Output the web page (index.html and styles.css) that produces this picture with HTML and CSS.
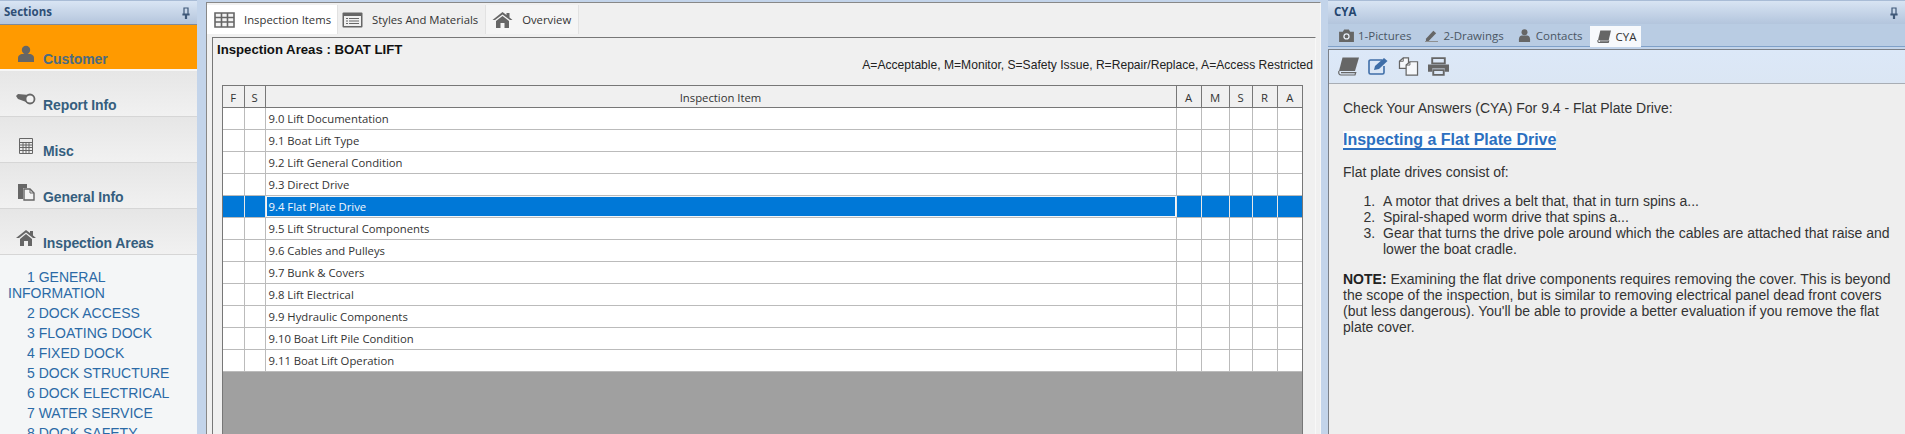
FILE: index.html
```html
<!DOCTYPE html>
<html lang="en">
<head>
<meta charset="utf-8">
<title>Inspection</title>
<link rel="stylesheet" href="styles.css">
</head>
<body>
<div class="app">
  <aside class="sections">
    <header class="pane-title"><span>Sections</span>
      <svg class="pin" viewBox="0 0 8 12" width="8" height="12"><path d="M2 1h4v6H2zM1 7h6v1H1zM3.500 8h1v4h-1z" fill="none" stroke="#3f5878" stroke-width="1.200"/></svg>
    </header>
    <div class="nav-item active">
      <svg class="nav-icon" viewBox="0 0 18 18"><circle cx="9" cy="5" r="4.200" fill="#666"/><path d="M1 17v-4c0-3 3-4 4-4h8c1 0 4 1 4 4v4z" fill="#666"/></svg>
      <span>Customer</span></div>
    <div class="nav-item">
      <svg class="nav-icon wide" viewBox="0 0 20 18"><path d="M0 5l2-2 11 1v8L2 8z" fill="#666"/><circle cx="14" cy="8" r="4.500" fill="#f2f2f2" stroke="#666" stroke-width="1.800"/></svg>
      <span>Report Info</span></div>
    <div class="nav-item">
      <svg class="nav-icon" viewBox="0 0 18 18"><path d="M2.500 1.500h13v15h-13zM2.500 5.500h13M2.500 8h13M2.500 10.500h13M2.500 13.500h13M6 5.500v11M9 5.500v11M12 5.500v11" fill="none" stroke="#666" stroke-width="1"/></svg>
      <span>Misc</span></div>
    <div class="nav-item">
      <svg class="nav-icon" viewBox="0 0 18 18"><path d="M1 1h9v4H6v11H1z" fill="#666"/><path d="M7 6h6l4 4v7H7z" fill="#f2f2f2" stroke="#666" stroke-width="1.400"/><path d="M13 6v4h4" fill="none" stroke="#666"/></svg>
      <span>General Info</span></div>
    <div class="nav-item">
      <svg class="nav-icon wide" viewBox="0 0 20 18"><path d="M10 1L0 9h3l7-5.500L17 9h3l-3-2.500V2h-3v2z" fill="#666"/><path d="M4 10l6-5 6 5v7h-4v-5H8v5H4z" fill="#666"/></svg>
      <span>Inspection Areas</span></div>
    <ul class="area-list">
      <li><span class="indent"></span>1 GENERAL INFORMATION</li>
      <li><span class="indent"></span>2 DOCK ACCESS</li>
      <li><span class="indent"></span>3 FLOATING DOCK</li>
      <li><span class="indent"></span>4 FIXED DOCK</li>
      <li><span class="indent"></span>5 DOCK STRUCTURE</li>
      <li><span class="indent"></span>6 DOCK ELECTRICAL</li>
      <li><span class="indent"></span>7 WATER SERVICE</li>
      <li><span class="indent"></span>8 DOCK SAFETY</li>
    </ul>
  </aside>

  <main class="center">
    <nav class="main-tabs">
      <div class="main-tab current">
        <svg class="tab-icon" viewBox="0 0 21 16"><path d="M1 1h19v14H1zM1 5.500h19M1 10h19M7.500 1v14M13.500 1v14" fill="#f4f4f4" stroke="#666" stroke-width="1.600"/></svg>
        <span>Inspection Items</span></div>
      <div class="main-tab second">
        <svg class="tab-icon" viewBox="0 0 21 16"><rect x="0.500" y="0.500" width="20" height="15" rx="1" fill="#666"/><rect x="2" y="4" width="17" height="10" fill="#f0f0f0"/><path d="M4 6.500h2M4 9h2M4 11.500h2M7 6.500h10M7 9h10M7 11.500h10" stroke="#666"/></svg>
        <span>Styles And Materials</span></div>
      <div class="main-tab third">
        <svg class="tab-icon" viewBox="0 0 20 16"><path d="M10 0L0 8h2.500L10 2.500 17.500 8H20l-3-2.500V1h-3v2z" fill="#666"/><path d="M3.500 9L10 4l6.500 5v7H12v-5H8v5H3.500z" fill="#666"/></svg>
        <span>Overview</span></div>
    </nav>
    <section class="inner">
      <h1 class="area-title">Inspection Areas : BOAT LIFT</h1>
      <p class="legend">A=Acceptable, M=Monitor, S=Safety Issue, R=Repair/Replace, A=Access Restricted</p>
      <div class="grid-wrap">
        <table class="grid">
          <colgroup><col class="c-f"><col class="c-s"><col><col class="c-a"><col class="c-m"><col class="c-s2"><col class="c-r"><col class="c-a2"></colgroup>
          <thead><tr><th>F</th><th>S</th><th>Inspection Item</th><th>A</th><th>M</th><th>S</th><th>R</th><th>A</th></tr></thead>
          <tbody>
            <tr><td></td><td></td><td>9.0 Lift Documentation</td><td></td><td></td><td></td><td></td><td></td></tr>
            <tr><td></td><td></td><td>9.1 Boat Lift Type</td><td></td><td></td><td></td><td></td><td></td></tr>
            <tr><td></td><td></td><td>9.2 Lift General Condition</td><td></td><td></td><td></td><td></td><td></td></tr>
            <tr><td></td><td></td><td>9.3 Direct Drive</td><td></td><td></td><td></td><td></td><td></td></tr>
            <tr class="selected"><td></td><td></td><td class="focus">9.4 Flat Plate Drive</td><td></td><td></td><td></td><td></td><td></td></tr>
            <tr><td></td><td></td><td>9.5 Lift Structural Components</td><td></td><td></td><td></td><td></td><td></td></tr>
            <tr><td></td><td></td><td>9.6 Cables and Pulleys</td><td></td><td></td><td></td><td></td><td></td></tr>
            <tr><td></td><td></td><td>9.7 Bunk &amp; Covers</td><td></td><td></td><td></td><td></td><td></td></tr>
            <tr><td></td><td></td><td>9.8 Lift Electrical</td><td></td><td></td><td></td><td></td><td></td></tr>
            <tr><td></td><td></td><td>9.9 Hydraulic Components</td><td></td><td></td><td></td><td></td><td></td></tr>
            <tr><td></td><td></td><td>9.10 Boat Lift Pile Condition</td><td></td><td></td><td></td><td></td><td></td></tr>
            <tr><td></td><td></td><td>9.11 Boat Lift Operation</td><td></td><td></td><td></td><td></td><td></td></tr>
          </tbody>
        </table>
        <div class="grid-empty"></div>
      </div>
    </section>
  </main>

  <aside class="cya">
    <header class="pane-title cya-title"><span>CYA</span>
      <svg class="pin" viewBox="0 0 8 12" width="8" height="12"><path d="M2 1h4v6H2zM1 7h6v1H1zM3.500 8h1v4h-1z" fill="none" stroke="#3f5878" stroke-width="1.200"/></svg>
    </header>
    <nav class="cya-tabs">
      <div class="cya-tab">
        <svg class="small-icon" viewBox="0 0 16 14"><path d="M0 3h4l1.500-2.500h5L12 3h4v11H0z" fill="#666"/><circle cx="8" cy="8" r="3.400" fill="#e8eef7"/><circle cx="8" cy="8" r="2" fill="#666"/></svg>
        <span>1-Pictures</span></div>
      <div class="cya-tab">
        <svg class="small-icon" viewBox="0 0 16 14"><path d="M2 10.500L10 2l3 2.500L5 13H2z" fill="#666"/><path d="M1 13.500h14" stroke="#888"/></svg>
        <span>2-Drawings</span></div>
      <div class="cya-tab">
        <svg class="small-icon" viewBox="0 0 14 14"><circle cx="7" cy="3.500" r="3.200" fill="#666"/><path d="M1 14v-3c0-3 2-4 3-4h6c1 0 3 1 3 4v3z" fill="#666"/></svg>
        <span>Contacts</span></div>
      <div class="cya-tab current">
        <svg class="small-icon" viewBox="0 0 16 14"><path d="M3.500 0.500H15L12.500 11H1z" fill="#666"/><path d="M1 11c-.5 2 .5 2.500 1.500 2.500H12l.5-1.500H3" fill="none" stroke="#666" stroke-width="1.200"/></svg>
        <span>CYA</span></div>
    </nav>
    <div class="cya-panel">
      <div class="cya-tools">
        <svg class="tool" viewBox="0 0 21 19"><path d="M4.500 0.500H21L17 14H1z" fill="#666"/><path d="M1 14c-.8 2.500.5 4 2 4H17l.7-2.400H3" fill="none" stroke="#666" stroke-width="1.200"/></svg>
        <svg class="tool" viewBox="0 0 21 19"><path d="M14 3H2.500A1.500 1.500 0 0 0 1 4.500v11A1.500 1.500 0 0 0 2.500 17h12a1.500 1.500 0 0 0 1.500-1.500V9" fill="none" stroke="#3f6ea8" stroke-width="1.600"/><path d="M6 13l1-4L16 1l3.500 3L11 12z" fill="#3f6ea8"/></svg>
        <svg class="tool" viewBox="0 0 21 20"><path d="M1 4.500L5 1h5.500v11H1z" fill="#f6f8fb" stroke="#666" stroke-width="1.300"/><path d="M8 8.500L12 5h8v14H8z" fill="#f6f8fb" stroke="#666" stroke-width="1.300"/><path d="M1 4.500h4V1M8 8.500h4V5" fill="none" stroke="#666"/></svg>
        <svg class="tool" viewBox="0 0 20 18"><path d="M4 1h12v5H4z" fill="none" stroke="#666" stroke-width="1.800"/><path d="M0 7h20v7h-4v-3H4v3H0z" fill="#666"/><path d="M5 12.500h10V17H5z" fill="none" stroke="#666" stroke-width="1.800"/></svg>
      </div>
      <article class="cya-body">
        <p>Check Your Answers (CYA) For 9.4 - Flat Plate Drive:</p>
        <h2 class="cya-head"><span>Inspecting a Flat Plate Drive</span></h2>
        <p>Flat plate drives consist of:</p>
        <ol>
          <li>A motor that drives a belt that, that in turn spins a...</li>
          <li>Spiral-shaped worm drive that spins a...</li>
          <li>Gear that turns the drive pole around which the cables are attached that raise and lower the boat cradle.</li>
        </ol>
        <p><strong>NOTE:</strong> Examining the flat drive components requires removing the cover. This is beyond the scope of the inspection, but is similar to removing electrical panel dead front covers (but less dangerous). You'll be able to provide a better evaluation if you remove the flat plate cover.</p>
      </article>
    </div>
  </aside>
</div>
</body>
</html>
```
FILE: styles.css
```css
* { box-sizing: border-box; }
html, body { margin: 0; padding: 0; height: 434px; overflow: hidden; }
body { background: #c3d4ea; font-family: "Liberation Sans", Arial, sans-serif; color: #333; }
.app { display: flex; height: 434px; align-items: stretch; }

/* left pane */
.sections { width: 197px; flex: none; background: #f4f6f7; display: flex; flex-direction: column; overflow: hidden; }
.pane-title { height: 25px; flex: none; display: flex; align-items: center; justify-content: space-between; padding: 0 7px 0 4px;
  background: linear-gradient(#d9e5f4, #b4c5dc); border-top: 1px solid #a9bcd6; border-bottom: 1px solid #7f8a99;
  font: bold 11.500px "Open Sans", sans-serif; color: #2f4f76; }
.pane-title span { position: relative; top: -1px; }
.nav-item { height: 46px; flex: none; display: flex; align-items: flex-end; padding: 0 0 3px 17px;
  background: linear-gradient(#e6e6e6, #f1f1f1); border-bottom: 1px solid #d6d6d6;
  font: bold 14px "Liberation Sans", sans-serif; letter-spacing: -0.1px; color: #355e7e; }
.nav-item span { margin-left: 8px; line-height: 16px; }
.nav-item.active { background: #ff9a00; border-bottom: 2px solid #f6f6f6; padding-bottom: 2px; color: #4b6b80; }
.nav-icon { width: 18px; height: 18px; flex: none; margin-bottom: 4px; }
.nav-icon.wide { width: 20px; margin-left: -1px; margin-right: -1px; }
.area-list { list-style: none; margin: 0; padding: 14px 8px 0 8px; font-size: 14px; line-height: 16px; color: #2b6aa6; }
.area-list li { margin-bottom: 4px; }
.indent { display: inline-block; width: 19px; }

/* centre */
.center { width: 1115px; flex: none; margin: 2px 0 0 9px; background: #f0f0f0; border: 1px solid #888; border-bottom: 0;
  border-right-color: #f7f7f7; padding: 2px 4px 0 5px; display: flex; flex-direction: column; }
.main-tabs { display: flex; height: 29px; flex: none; margin-left: -5px; }
.main-tab { display: flex; align-items: center; padding: 0 7px 0 7px; background: #f5f5f5; border-right: 1px solid #e2e2e2;
  font: 11.300px "Open Sans", sans-serif; color: #333; }
.main-tab.current { background: #fff; padding-right: 6px; }
.main-tab.second { background: #efefef; padding-left: 4px; }
.main-tab.third { padding-left: 6px; }
.tab-icon { width: 21px; height: 16px; margin-right: 9px; flex: none; }
.inner { flex: 1; margin-top: 3px; border: 1px solid #777; border-bottom: 0; border-right-color: #f8f8f8; background: #f0f0f0; display: flex; flex-direction: column; padding: 0 12px 0 9px; }
.area-title { margin: 4px 0 0 -5px; font: bold 13.200px/16px "Liberation Sans", sans-serif; color: #111; }
.legend { margin: -1px -10px 0 0; text-align: right; font-size: 12.100px; line-height: 16px; color: #222; }
.grid-wrap { margin-top: 12px; flex: 1; border: 1px solid #777; border-bottom: 0; background: #a0a0a0; display: flex; flex-direction: column; }
.grid { width: 100%; border-collapse: collapse; table-layout: fixed; background: #fff; font: 11.300px "Open Sans", sans-serif; color: #333; }
.c-f { width: 21px; } .c-s { width: 21px; } .c-a { width: 25px; } .c-m { width: 28px; } .c-s2 { width: 23px; } .c-r { width: 25px; } .c-a2 { width: 25px; }
.grid th { height: 21px; font-weight: 400; background: #f0f0f0; border-right: 1px solid #777; border-bottom: 1px solid #777; text-align: center; padding: 2px 0 0; }
.grid th:last-child { border-right: 0; }
.grid td { height: 22px; border-right: 1px solid #bbb; border-bottom: 1px solid #bbb; padding: 0 0 0 3px; white-space: nowrap; overflow: hidden; }
.grid td:last-child { border-right: 0; }
.selected td { background: #0078d7; color: #f2f7fc; border-bottom-color: #bbb; border-right-color: #e8e8e8; }
.selected td.focus { box-shadow: inset 0 0 0 1px #f2f6fa; }

/* right */
.cya { flex: 1; margin-left: 7px; min-width: 0; display: flex; flex-direction: column; background: #c3d4ea; }
.cya-title { height: 24px; border-bottom: 0; background: linear-gradient(#d8e4f3, #b3c5dd); padding-left: 6px; color: #24466e; }
.cya-tabs { height: 23px; flex: none; display: flex; align-items: stretch; background: #b9cce3; padding-left: 11px; border-bottom: 1px solid #7fa0c8; }
.cya-tab { display: flex; align-items: center; font: 11.500px "Open Sans", sans-serif; color: #4a5663; margin-right: 13px; }
.cya-tab.current { background: #f7f9fc; color: #333; padding: 0 5px 0 7px; margin: 2px 0 -1px -6px; }
.small-icon { width: 15px; height: 13px; margin-right: 4px; flex: none; }
.cya-panel { flex: 1; margin-top: 2px; border: 1px solid #7b8088; border-bottom: 0; border-right: 0; background: #eeeeee; display: flex; flex-direction: column; min-height: 0; }
.cya-tools { height: 34px; flex: none; background: linear-gradient(#dce8f8, #dbe6f4); border-bottom: 1px solid #a8adb4; display: flex; align-items: center; gap: 9px; padding-left: 9px; }
.tool { width: 21px; height: 19px; flex: none; }
.cya-body { padding: 16px 14px 0 14px; font-size: 14px; line-height: 16px; color: #333; }
.cya-body p { margin: 0 0 14px; }
.cya-head { margin: 15px 0; font-size: 16px; line-height: 18px; font-weight: 700; color: #2b6fc0; }
.cya-head span { background: #fdfdfd; border-bottom: 2px solid #2b6fc0; }
.cya-body ol { margin: -1px 0 14px; padding-left: 40px; }
.cya-body li::marker { content: counter(list-item) ".\00a0\00a0"; }
.cya-body strong { color: #222; }
```
